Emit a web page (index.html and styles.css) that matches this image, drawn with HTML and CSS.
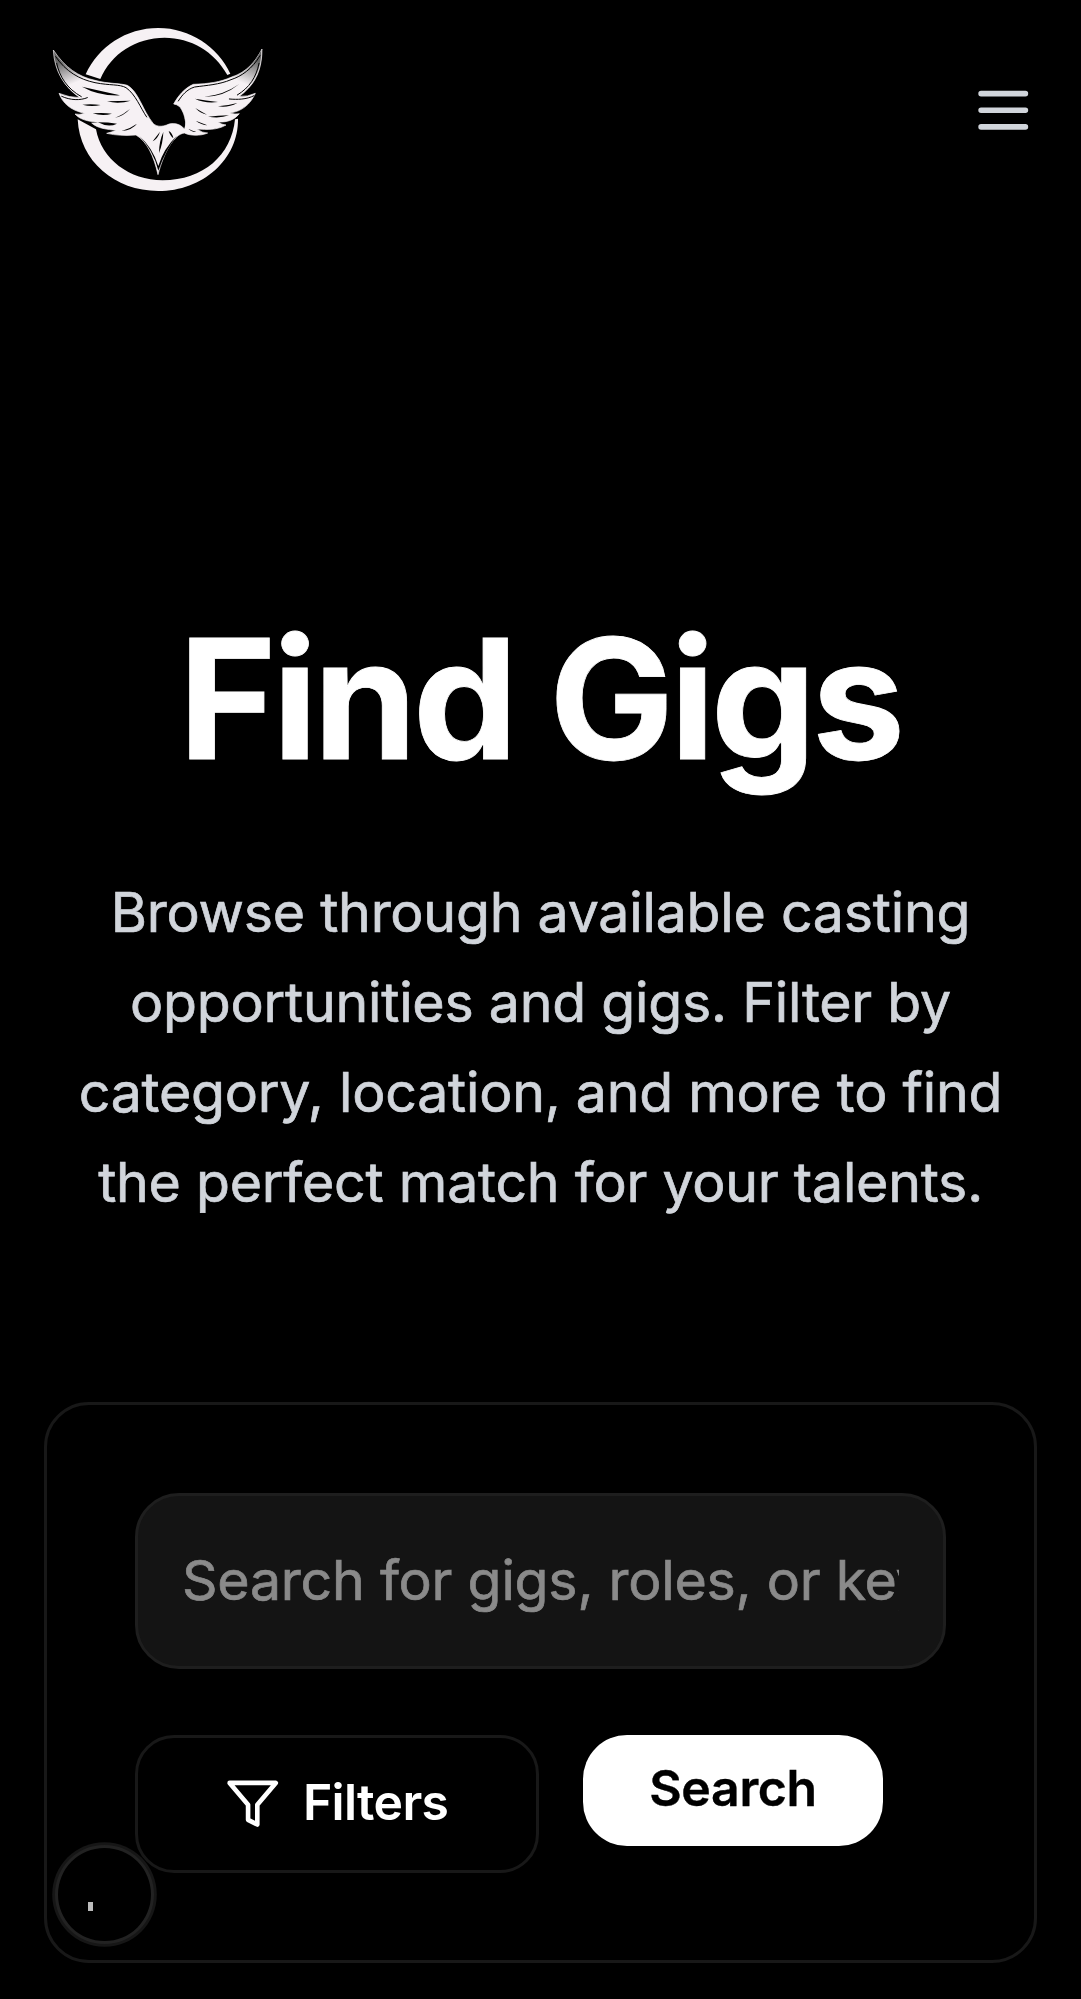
FILE: index.html
```html
<!DOCTYPE html>
<html lang="en">
<head>
<meta charset="utf-8">
<title>Find Gigs</title>
<link rel="stylesheet" href="styles.css">
</head>
<body>
<header class="header">
  <a class="logo" href="#" aria-label="Home">
    <svg viewBox="0 0 720 570" width="240" height="190">
      <defs>
        <linearGradient id="tipL" gradientUnits="userSpaceOnUse" x1="60" y1="140" x2="90" y2="210">
          <stop offset="0" stop-color="#666"/><stop offset="1" stop-color="#f6f1f4"/>
        </linearGradient>
        <linearGradient id="tipR" gradientUnits="userSpaceOnUse" x1="648" y1="135" x2="618" y2="208">
          <stop offset="0" stop-color="#666"/><stop offset="1" stop-color="#f6f1f4"/>
        </linearGradient>
      </defs>
      <g fill="#f6f1f4">
        <path d="M137 178C175 95 258 39 355 39C450 39 534 96 571 176L562 180C523 109 452 68 374 68C287 68 214 116 181 192Z"/>
        <path d="M113 313L168 343C184 432 268 496 368 496C490 496 575 420 585 313L594 311C596 433 488 528 355 528C225 528 119 439 113 313Z"/>
      </g>
      <g stroke="#f6f1f4" stroke-width="2" stroke-linejoin="round">
        <path fill="url(#tipL)" d="M40 105C75 158 115 185 165 196C205 207 237 204 262 211C296 230 307 285 340 326C352 336 366 335 380 330C397 322 420 325 433 342C439 325 436 304 425 284C420 275 414 269 401 267C414 243 434 219 460 208C506 206 540 202 575 186C620 172 647 139 666 102C666 148 655 188 626 219Q612 234 598 244Q623 246 646 235C631 268 606 289 570 294Q584 299 598 296C581 316 562 322 534 321Q545 329 558 330C530 346 500 344 472 342Q485 354 503 354C480 364 449 362 433 354C403 357 371 413 354 479C341 422 321 379 288 360Q239 364 200 355Q217 351 229 346C201 343 174 341 155 324Q169 325 178 321C147 321 120 314 105 297Q120 300 134 295C91 286 68 264 57 235Q88 248 120 248C75 218 43 171 40 105Z"/>
        <path fill="url(#tipR)" stroke="none" d="M575 187C620 173 646 140 664 105C664 148 653 188 624 219L545 225Z"/>
      </g>
      <g fill="none" stroke="#000" stroke-width="3" stroke-linecap="round">
        <path d="M47 125C78 170 118 193 165 203C210 212 238 207 258 218C287 238 302 280 320 306"/>
        <path d="M660 122C637 162 604 184 573 194C538 209 500 211 464 216C440 223 426 241 415 258"/>
        <path d="M50 145C59 185 80 220 124 245M657 145C649 187 628 218 592 240"/>
        <path d="M65 244C91 256 121 257 142 248M642 242C619 254 592 254 568 252"/>
      </g>
      <g fill="#000">
        <path d="M126 215Q175 243 240 241Q180 227 126 215Z"/>
        <path d="M127 269Q155 277 182 270Q155 266 127 269ZM201 259Q236 268 272 257Q235 258 201 259ZM158 295Q188 304 216 296Q188 292 158 295ZM225 309Q252 302 270 282Q250 299 225 309ZM245 348Q278 344 291 326Q272 340 245 348ZM174 322Q205 322 231 326Q205 339 174 322Z"/>
        <path d="M494 245Q550 246 598 207Q551 240 494 245ZM465 251Q495 266 534 261Q497 256 465 251ZM534 274Q564 279 592 264Q563 272 534 274ZM466 279Q482 296 501 299Q480 288 466 279ZM467 317Q485 330 502 331Q483 323 467 317ZM504 305Q540 311 567 301Q534 302 504 305ZM445 341Q455 351 469 351Q455 346 445 341Z"/>
        <path d="M415 301L427 311L435 318L435 342L429 319L416 309Z"/>
        <path d="M360 350Q350 363 338 379Q354 370 360 350ZM370 351Q357 380 357 414Q369 384 370 351ZM386 348Q391 364 400 370Q397 353 386 348Z"/>
        <path d="M298 363Q338 398 355 453Q371 400 410 363Q377 404 355 467Q339 404 298 363Z"/>
      </g>
    </svg>
  </a>
  <button class="menu" aria-label="Open menu">
    <svg viewBox="0 0 24 24" fill="none" stroke="currentColor" stroke-width="2" stroke-linecap="round"><path d="M4 6h16M4 12h16M4 18h16"/></svg>
  </button>
</header>
<main class="main">
  <h1 class="title">Find Gigs</h1>
  <p class="intro">Browse through available casting opportunities and gigs. Filter by category, location, and more to find the perfect match for your talents.</p>
  <form class="card">
    <input class="search-input" type="text" placeholder="Search for gigs, roles, or keywords...">
    <div class="actions">
      <button class="filters" type="button">
        <svg class="filter-icon" viewBox="0 0 24 24" fill="none" stroke="currentColor" stroke-width="2" stroke-linecap="round" stroke-linejoin="round"><path d="M22 3H2l8 9.46V19l4 2v-8.54L22 3z"/></svg>
        <span class="filters-label">Filters</span>
      </button>
      <button class="submit" type="button">Search</button>
    </div>
  </form>
</main>
<div class="bubble"><span class="bubble-dot"></span></div>
</body>
</html>
```
FILE: styles.css
```css
* { box-sizing: border-box; }
body {
  margin: 0;
  min-height: 1999px;
  background: #000;
  color: #fff;
  font-family: Inter, "Liberation Sans", sans-serif;
  position: relative;
}
button, input { font: inherit; color: inherit; margin: 0; }
svg { display: block; }
.header {
  display: flex;
  justify-content: space-between;
  align-items: center;
  height: 220px;
  padding: 0 44.6px 0 40px;
}
.menu { padding: 0; border: 0; background: none; color: #d1d5db; }
.menu svg { width: 66.5px; height: 66.5px; }
.main { padding: 395.5px 44px 0; }
.title {
  margin: 0;
  padding-right: 1px;
  font-size: 166.3px;
  font-weight: 700;
  line-height: 166px;
  letter-spacing: -0.0242em;
  -webkit-text-stroke: 0.8px currentColor;
  text-align: center;
}
.intro {
  margin: 85px 0 0;
  font-size: 55.44px;
  line-height: 90px;
  letter-spacing: -0.23px;
  -webkit-text-stroke: 0.7px currentColor;
  color: #d1d5db;
  text-align: center;
}
.card {
  margin-top: 175.5px;
  height: 561px;
  padding: 88px;
  border: 3px solid #181818;
  border-radius: 45px;
}
.search-input {
  display: block;
  width: 100%;
  height: 176px;
  padding: 0 44px 3px;
  border: 3px solid #1e1e1e;
  border-radius: 44px;
  background: #141414;
  font-size: 55.44px;
  letter-spacing: -0.23px;
}
.search-input::placeholder {
  color: #8a8a8a;
  opacity: 1;
  -webkit-text-stroke: 0.7px #8a8a8a;
}
.actions {
  display: flex;
  align-items: flex-start;
  gap: 44.35px;
  margin-top: 66px;
}
.filters, .submit { font-size: 49.9px; font-weight: 600; line-height: 66.5px; }
.filters {
  display: flex;
  align-items: center;
  justify-content: center;
  gap: 22.2px;
  width: 403.7px;
  height: 137.5px;
  padding: 0;
  border: 3px solid #181818;
  border-radius: 39px;
  background: #000;
}
.filters-label { padding-bottom: 3px; letter-spacing: -0.65px; }
.filter-icon { width: 55.4px; height: 55.4px; }
.submit {
  width: 300px;
  height: 110.5px;
  padding: 0 0 4px;
  border: 0;
  border-radius: 44px;
  background: #fff;
  color: #000;
  letter-spacing: -0.3px;
  -webkit-text-stroke: 0.4px currentColor;
}
.bubble {
  position: absolute;
  left: 55px;
  top: 1845px;
  width: 98.5px;
  height: 99px;
  border: 3px solid #222;
  border-radius: 50%;
  background: #000;
  box-shadow: 0 0 0 2.77px #161616;
}
.bubble-dot {
  position: absolute;
  left: 29.5px;
  top: 53.5px;
  width: 5.3px;
  height: 9.5px;
  background: #bbb;
}
```
